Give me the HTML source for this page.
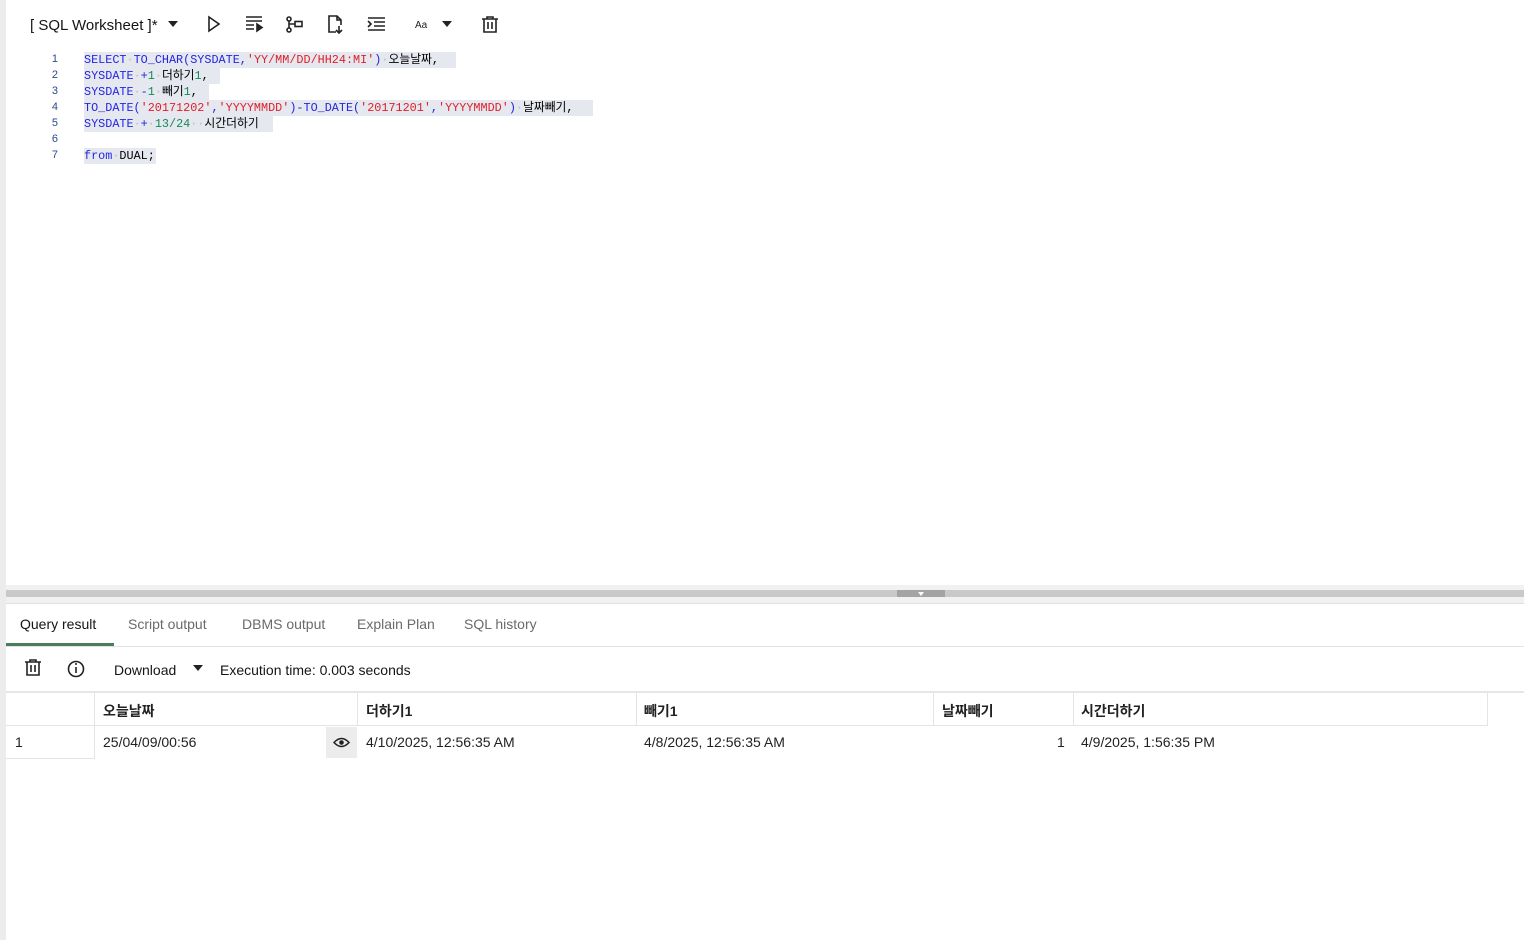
<!DOCTYPE html>
<html><head><meta charset="utf-8"><style>
body{margin:0;width:1524px;height:940px;background:#fff;font-family:"Liberation Sans","Noto Sans CJK KR",sans-serif;position:relative;overflow:hidden;color:#161513}
.abs{position:absolute}
.lb{left:0;top:0;width:6px;height:940px;background:#ececec}
.code{font-family:"Liberation Mono","Noto Sans CJK KR",monospace;font-size:11.8px;}
.ln{position:absolute;left:40px;width:18px;text-align:right;color:#2a4a8a;font-size:11px;font-family:"Liberation Sans",sans-serif}
.cl{position:absolute;left:84px;height:16px;line-height:16px;background:#e5e8ef;white-space:pre;color:#000}
.k{color:#2525e0}.s{color:#e0202a}.n{color:#148a5a}.d{color:#bbb}
.tab{position:absolute;top:616px;font-size:14px;color:#6a6a6a}
.th{position:absolute;top:701px;font-size:14px;font-weight:bold;color:#222}
.td{position:absolute;top:734px;font-size:14px;color:#222}
.vl{position:absolute;width:1px;background:#e4e4e4}
</style></head><body>
<div class="abs lb"></div>
<div class="abs" style="left:30px;top:17px;font-size:15px;color:#161513">[ SQL Worksheet ]*</div>
<svg class="abs" style="left:0;top:0" width="520" height="45">
<path d="M168 21h10l-5 6z" fill="#222"/>
<path d="M209 17l10 7-10 7z" fill="none" stroke="#222" stroke-width="1.6"/>
<g stroke="#222" stroke-width="1.6" fill="none"><path d="M246 17h16M246 21h16M246 25h8M246 29h8"/><path d="M257 24l5 3.5-5 3.5z" fill="#222"/></g>
<g stroke="#222" stroke-width="1.6" fill="none"><circle cx="289" cy="19" r="2"/><circle cx="289" cy="30" r="2"/><path d="M289 21v7M289 24h6"/><rect x="295" y="21.5" width="7" height="5"/></g>
<g stroke="#222" stroke-width="1.6" fill="none"><path d="M336 32h-7V16h8l4 4v5"/><path d="M337 16v4h4M339 26v7M336 30l3 3 3-3"/></g>
<g stroke="#222" stroke-width="1.6" fill="none"><path d="M368 18h17M374 22h11M374 26h11M368 30h17M368 21l3 3-3 3"/></g>
<text x="415" y="28" font-size="10" font-family="Liberation Sans" fill="#222">Aa</text>
<path d="M442 21h10l-5 6z" fill="#222"/>
<g stroke="#222" stroke-width="1.6" fill="none"><path d="M482 19h16M487 19v-2h6v2M484 19v13h12V19M488 22v7M492 22v7"/></g>
</svg>
<div class="code">
<div class="ln" style="top:53px">1</div><div class="ln" style="top:69px">2</div><div class="ln" style="top:85px">3</div><div class="ln" style="top:101px">4</div><div class="ln" style="top:117px">5</div><div class="ln" style="top:133px">6</div><div class="ln" style="top:149px">7</div>
<div class="cl" style="top:52px;width:372px"><span class="k">SELECT</span><span class="d">·</span><span class="k">TO_CHAR(SYSDATE,</span><span class="s">'YY/MM/DD/HH24:MI'</span><span class="k">)</span><span class="d">·</span>오늘날짜,</div>
<div class="cl" style="top:68px;width:136px"><span class="k">SYSDATE</span><span class="d">·</span><span class="k">+</span><span class="n">1</span><span class="d">·</span>더하기<span class="n">1</span>,</div>
<div class="cl" style="top:84px;width:125px"><span class="k">SYSDATE</span><span class="d">·</span><span class="k">-</span><span class="n">1</span><span class="d">·</span>빼기<span class="n">1</span>,</div>
<div class="cl" style="top:100px;width:509px"><span class="k">TO_DATE(</span><span class="s">'20171202'</span><span class="k">,</span><span class="s">'YYYYMMDD'</span><span class="k">)-TO_DATE(</span><span class="s">'20171201'</span><span class="k">,</span><span class="s">'YYYYMMDD'</span><span class="k">)</span><span class="d">·</span>날짜빼기,</div>
<div class="cl" style="top:116px;width:189px"><span class="k">SYSDATE</span><span class="d">·</span><span class="k">+</span><span class="d">·</span><span class="n">13/24</span><span class="d">··</span>시간더하기</div>
<div class="cl" style="top:132px;left:90px;width:0"> </div>
<div class="cl" style="top:148px;width:72px"><span class="k">from</span><span class="d">·</span>DUAL;</div>
</div>
<div class="abs" style="left:6px;top:585px;width:1518px;height:18px;background:#f1f1f1"></div>
<div class="abs" style="left:6px;top:590px;width:1518px;height:7px;background:#c9c9c9"></div>
<div class="abs" style="left:897px;top:590px;width:48px;height:7px;background:#a3a3a3"></div>
<div class="abs" style="left:918px;top:592px;width:0;height:0;border-left:3px solid transparent;border-right:3px solid transparent;border-top:4px solid #fff"></div>
<div class="abs" style="left:6px;top:603px;width:1518px;height:1px;background:#e0e0e0"></div>
<div class="tab" style="left:20px;color:#161513">Query result</div>
<div class="tab" style="left:128px">Script output</div>
<div class="tab" style="left:242px">DBMS output</div>
<div class="tab" style="left:357px">Explain Plan</div>
<div class="tab" style="left:464px">SQL history</div>
<div class="abs" style="left:6px;top:643px;width:108px;height:3px;background:#4b7d5a"></div>
<div class="abs" style="left:6px;top:646px;width:1518px;height:1px;background:#e2e2e2"></div>
<svg class="abs" style="left:0;top:650px" width="220" height="40">
<g stroke="#222" stroke-width="1.6" fill="none"><path d="M25 12h16M30 12v-2h6v2M27 12v13h12V12M31 15v7M35 15v7"/><circle cx="76" cy="19" r="7.5"/><path d="M76 17v6"/></g>
<circle cx="76" cy="14" r="1" fill="#222"/>
<path d="M193 15h10l-5 6z" fill="#222"/>
</svg>
<div class="abs" style="left:114px;top:662px;font-size:14px;color:#161513">Download</div>
<div class="abs" style="left:220px;top:662px;font-size:14px;color:#161513">Execution time: 0.003 seconds</div>
<div class="abs" style="left:6px;top:691px;width:1518px;height:2px;background:#e6e6e6"></div>
<div class="abs" style="left:6px;top:725px;width:1482px;height:1px;background:#e4e4e4"></div>
<div class="abs" style="left:6px;top:758px;width:88px;height:1px;background:#e4e4e4"></div>
<div class="vl" style="left:94px;top:693px;height:66px"></div>
<div class="vl" style="left:357px;top:693px;height:33px"></div>
<div class="vl" style="left:636px;top:693px;height:33px"></div>
<div class="vl" style="left:933px;top:693px;height:33px"></div>
<div class="vl" style="left:1073px;top:693px;height:33px"></div>
<div class="vl" style="left:1487px;top:693px;height:33px"></div>
<div class="th" style="left:103px">오늘날짜</div>
<div class="th" style="left:366px">더하기1</div>
<div class="th" style="left:644px">빼기1</div>
<div class="th" style="left:942px">날짜빼기</div>
<div class="th" style="left:1081px">시간더하기</div>
<div class="td" style="left:15px">1</div>
<div class="td" style="left:103px">25/04/09/00:56</div>
<div class="abs" style="left:326px;top:727px;width:31px;height:31px;background:#ececec"></div>
<svg class="abs" style="left:326px;top:727px" width="31" height="31"><path d="M8 15.5q7.5-8 15 0q-7.5 8-15 0z" fill="none" stroke="#222" stroke-width="1.5"/><circle cx="15.5" cy="15.5" r="2.3" fill="#222"/></svg>
<div class="td" style="left:366px">4/10/2025, 12:56:35 AM</div>
<div class="td" style="left:644px">4/8/2025, 12:56:35 AM</div>
<div class="td" style="left:1057px">1</div>
<div class="td" style="left:1081px">4/9/2025, 1:56:35 PM</div>
</body></html>
